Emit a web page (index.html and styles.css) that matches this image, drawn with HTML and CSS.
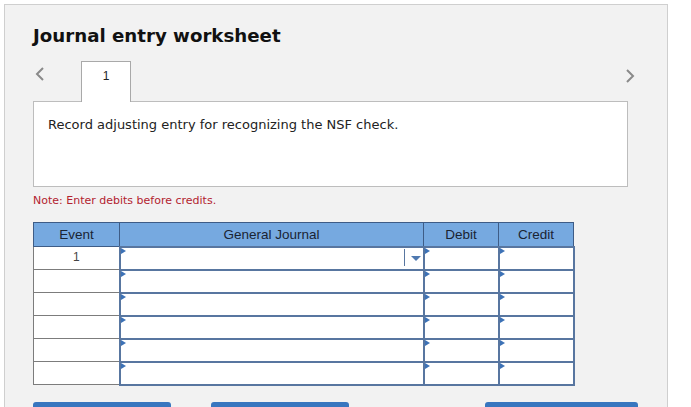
FILE: index.html
```html
<!DOCTYPE html>
<html>
<head>
<meta charset="utf-8">
<link rel="stylesheet" href="styles.css">
</head>
<body>
<div class="panel">
  <h1 class="title">Journal entry worksheet</h1>
  <div class="tabs">
    <span class="arrow prev"><svg width="10" height="14" viewBox="0 0 10 14"><polyline points="8,1 2,7 8,13" fill="none" stroke="#8a8a8a" stroke-width="2"/></svg></span>
    <div class="tab">1</div>
    <span class="spacer"></span>
    <span class="arrow next"><svg width="10" height="14" viewBox="0 0 10 14"><polyline points="2,1 8,7 2,13" fill="none" stroke="#8a8a8a" stroke-width="2"/></svg></span>
  </div>
  <div class="box">Record adjusting entry for recognizing the NSF check.</div>
  <p class="note">Note: Enter debits before credits.</p>
  <table class="journal">
    <thead>
      <tr><th class="c-event">Event</th><th class="c-gj">General Journal</th><th class="c-amt">Debit</th><th class="c-amt">Credit</th></tr>
    </thead>
    <tbody>
      <tr><td class="ev">1</td><td class="in"><span class="mark"></span><span class="dd"></span></td><td class="in"><span class="mark"></span></td><td class="in"><span class="mark"></span></td></tr>
      <tr><td class="ev"></td><td class="in"><span class="mark"></span></td><td class="in"><span class="mark"></span></td><td class="in"><span class="mark"></span></td></tr>
      <tr><td class="ev"></td><td class="in"><span class="mark"></span></td><td class="in"><span class="mark"></span></td><td class="in"><span class="mark"></span></td></tr>
      <tr><td class="ev"></td><td class="in"><span class="mark"></span></td><td class="in"><span class="mark"></span></td><td class="in"><span class="mark"></span></td></tr>
      <tr><td class="ev"></td><td class="in"><span class="mark"></span></td><td class="in"><span class="mark"></span></td><td class="in"><span class="mark"></span></td></tr>
      <tr><td class="ev"></td><td class="in"><span class="mark"></span></td><td class="in"><span class="mark"></span></td><td class="in"><span class="mark"></span></td></tr>
    </tbody>
  </table>
  <div class="buttons">
    <span class="btn b1"></span>
    <span class="btn b2"></span>
    <span class="btn b3"></span>
  </div>
</div>
</body>
</html>
```
FILE: styles.css
```css
html, body {
  margin: 0;
  padding: 0;
  background: #ffffff;
  overflow: hidden;
}
body {
  padding: 4px 0 0 4px;
}
.panel {
  width: 664px;
  height: 420px;
  background: #f2f2f2;
  border: 1px solid #cfcfcf;
  padding: 0 38px 0 28px;
  box-sizing: border-box;
  font-family: "DejaVu Sans", Verdana, sans-serif;
}
.title {
  margin: 0;
  padding-top: 20px;
  font-size: 18.2px;
  line-height: 22px;
  font-weight: bold;
  color: #111;
}
.tabs {
  display: flex;
  align-items: flex-start;
  margin-top: 14px;
  height: 40px;
}
.arrow {
  display: flex;
}
.prev {
  width: 48px;
  padding-top: 6px;
  padding-left: 2px;
  box-sizing: border-box;
}
.spacer { flex: 1; }
.next {
  padding-top: 8px;
  margin-right: -6px;
}
.tab {
  position: relative;
  z-index: 1;
  width: 50px;
  height: 41px;
  box-sizing: border-box;
  background: #fff;
  border: 1px solid #a9a9a9;
  border-bottom: none;
  text-align: center;
  font-family: "Liberation Sans", Arial, sans-serif;
  font-size: 12px;
  color: #222;
  padding-top: 7px;
}
.box {
  width: 595px;
  height: 86px;
  box-sizing: border-box;
  background: #fff;
  border: 1px solid #bdbdbd;
  padding: 15px 0 0 14px;
  font-size: 13px;
  line-height: 16px;
  color: #222;
}
.note {
  margin: 7px 0 0 0;
  font-size: 11px;
  line-height: 14px;
  color: #b2232f;
}
.journal {
  margin-top: 14px;
  border-collapse: collapse;
  font-family: "Liberation Sans", Arial, sans-serif;
}
.journal th {
  background: #76a9e0;
  border: 1px solid #3e5c86;
  height: 24px;
  padding: 0;
  font-size: 13.5px;
  font-weight: normal;
  color: #1a2433;
  box-sizing: border-box;
}
.c-event { width: 86px; }
.c-gj { width: 304px; }
.c-amt { width: 75px; }
.journal td {
  height: 23px;
  padding: 0;
  box-sizing: border-box;
  background: #fff;
}
.journal td.ev {
  border: 1px solid #7c7c7c;
  text-align: center;
  font-size: 12px;
  color: #444;
  vertical-align: top;
  padding-top: 3px;
}
.journal td.in {
  border: 2px solid #5876a0;
  position: relative;
}
.mark {
  position: absolute;
  left: 0;
  top: 0;
  width: 0;
  height: 0;
  border-top: 3px solid transparent;
  border-bottom: 3px solid transparent;
  border-left: 5px solid #3d72b6;
}
.dd {
  position: absolute;
  right: 0;
  top: 1px;
  width: 18px;
  height: 17px;
  border-left: 1px solid #5876a0;
}
.dd::after {
  content: "";
  position: absolute;
  left: 6px;
  top: 7px;
  border-left: 5px solid transparent;
  border-right: 5px solid transparent;
  border-top: 5px solid #4f79b0;
}
.buttons {
  display: flex;
  margin-top: 16px;
}
.btn {
  display: block;
  flex-shrink: 0;
  height: 30px;
  background: #3876bf;
  border-radius: 3px;
}
.b1 { width: 138px; }
.b2 { width: 138px; margin-left: 40px; }
.b3 { width: 153px; margin-left: 136px; }
```
